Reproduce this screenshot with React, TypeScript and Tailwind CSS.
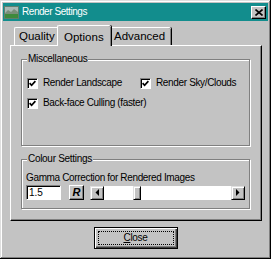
import * as React from "react";

const font = { fontFamily: '"Liberation Sans", Arial, sans-serif' };

const CheckBox = () => (
  <span className="w-[11px] h-[11px] shrink-0 bg-white border border-t-[#808080] border-l-[#808080] border-b-white border-r-white shadow-[inset_1px_1px_0_#000] flex items-center justify-center">
    <svg width="7" height="7" viewBox="0 0 7 7">
      <path d="M0.6 3.2 L2.6 5.3 L6.4 1.2" stroke="#000" strokeWidth="1.7" fill="none" />
    </svg>
  </span>
);

interface OptionProps {
  label: string;
  className?: string;
}

const Option = ({ label, className }: OptionProps) => (
  <div className={"flex items-center gap-[5px] h-[14px] " + (className ?? "")}>
    <CheckBox />
    <span className="text-[10px] tracking-[-0.35px] text-black leading-none">{label}</span>
  </div>
);

interface GroupProps {
  title: string;
  className?: string;
  children: React.ReactNode;
}

const Group = ({ title, className, children }: GroupProps) => (
  <div
    className={
      "relative ml-[10px] w-[229px] border border-[#808080] shadow-[1px_1px_0_#fff,inset_1px_1px_0_#fff] " +
      (className ?? "")
    }
  >
    <span className="absolute left-[5px] -top-[7px] bg-[#c3c3c3] px-[1px] text-[10px] tracking-[-0.3px] leading-[12px] text-black">
      {title}
    </span>
    {children}
  </div>
);

const Arrow = ({ dir }: { dir: "left" | "right" }) => (
  <div className="w-[14px] h-full bg-[#c3c3c3] border border-t-[#dfdfdf] border-l-[#dfdfdf] border-r-black border-b-black shadow-[inset_1px_1px_0_#fff,inset_-1px_-1px_0_#808080] flex items-center justify-center">
    <svg width="4" height="7" viewBox="0 0 4 7">
      {dir === "left" ? <path d="M4 0 L0.5 3.5 L4 7 Z" fill="#000" /> : <path d="M0 0 L3.5 3.5 L0 7 Z" fill="#000" />}
    </svg>
  </div>
);

export default function App() {
  return (
    <div
      style={font}
      className="w-[271px] h-[259px] bg-[#c3c3c3] p-[3px] flex flex-col shadow-[inset_-1px_-1px_0_#000,inset_1px_1px_0_#dfdfdf,inset_-2px_-2px_0_#808080,inset_2px_2px_0_#fff]"
    >
      {/* title bar */}
      <div className="h-[18px] bg-[#128d8d] flex items-center pl-[1px] pr-[2px]">
        <svg width="15" height="13" viewBox="0 0 15 13" className="shrink-0">
          <rect x="0" y="0" width="15" height="13" fill="#5f7f6f" />
          <rect x="1" y="1" width="13" height="6" fill="#a9b8b4" />
          <rect x="1" y="7" width="13" height="5" fill="#3f8a3c" />
          <path d="M1 7 L4 4 L7 6 L10 3 L14 6 L14 8 L1 8 Z" fill="#7a8f7a" />
        </svg>
        <span className="ml-[3px] text-white text-[10px] tracking-[-0.45px] leading-none">Render Settings</span>
        <div className="ml-auto w-[15px] h-[13px] bg-[#c3c3c3] border border-t-white border-l-white border-r-black border-b-black shadow-[inset_-1px_-1px_0_#808080] flex items-center justify-center">
          <svg width="8" height="7" viewBox="0 0 8 7">
            <path d="M0.5 0.5 L7.5 6.5 M7.5 0.5 L0.5 6.5" stroke="#000" strokeWidth="1.6" />
          </svg>
        </div>
      </div>

      {/* tabs */}
      <div className="mt-[4px] ml-[7px] h-[20px] flex items-end">
        <div className="ml-[4px] w-[45px] h-[18px] border-t border-l border-white rounded-tl-[2px] flex items-center pl-[4px] text-[11.5px] text-black">
          Quality
        </div>
        <div className="relative z-10 -ml-[2px] w-[54px] h-[21px] -mb-[1px] bg-[#c3c3c3] border-t border-l border-white rounded-t-[2px] shadow-[inset_-1px_0_0_#808080,1px_0_0_#000] flex items-start pt-[3px] pl-[6px] text-[11.5px] text-black">
          Options
        </div>
        <div className="w-[60px] h-[18px] border-t border-white rounded-tr-[2px] shadow-[inset_-1px_0_0_#808080,1px_0_0_#000] flex items-center pl-[3px] text-[11.5px] text-black">
          Advanced
        </div>
      </div>

      {/* panel */}
      <div className="ml-[7px] w-[252px] h-[176px] border-t border-l border-white border-r border-b border-r-black border-b-black shadow-[inset_-1px_-1px_0_#808080] flex flex-col">
        <Group title="Miscellaneous" className="mt-[13px] h-[87px]">
          <div className="pt-[16px] pl-[5px] flex flex-col gap-[6px]">
            <div className="flex">
              <Option label="Render Landscape" className="w-[113px]" />
              <Option label="Render Sky/Clouds" />
            </div>
            <Option label="Back-face Culling (faster)" />
          </div>
        </Group>

        <Group title="Colour Settings" className="mt-[13px] h-[50px]">
          <div className="pt-[12px] pl-[4px]">
            <div className="h-[12px] text-[10px] tracking-[-0.35px] leading-[12px] text-black">
              Gamma Correction for Rendered Images
            </div>
            <div className="mt-[1px] flex items-center h-[15px]">
              <div className="w-[35px] h-[15px] bg-white border border-t-[#808080] border-l-[#808080] border-b-white border-r-white shadow-[inset_1px_1px_0_#000] pl-[2px] flex items-center text-[10px] leading-none text-black">
                1.5
              </div>
              <div className="ml-[8px] w-[15px] h-[15px] bg-[#c3c3c3] border border-t-white border-l-white border-r-black border-b-black shadow-[inset_-1px_-1px_0_#808080] flex items-center justify-center text-[11px] font-bold italic leading-none text-black">
                R
              </div>
              <div className="ml-[6px] w-[155px] h-[14px] bg-white flex">
                <Arrow dir="left" />
                <div className="ml-[29px] w-[8px] h-full bg-[#c3c3c3] border border-t-[#dfdfdf] border-l-[#dfdfdf] border-r-black border-b-black shadow-[inset_1px_1px_0_#fff,inset_-1px_-1px_0_#808080]" />
                <div className="flex-1" />
                <Arrow dir="right" />
              </div>
            </div>
          </div>
        </Group>
      </div>

      {/* close button */}
      <div className="mt-[6px] flex justify-center">
        <div className="w-[84px] h-[22px] border border-black bg-[#c3c3c3] shadow-[inset_1px_1px_0_#fff,inset_-1px_-1px_0_#404040,inset_-2px_-2px_0_#808080] flex p-[3px]">
          <div className="flex-1 border border-dotted border-black flex items-center justify-center text-[10px] tracking-[-0.3px] leading-none text-black">
            <span>
              <span className="underline">C</span>lose
            </span>
          </div>
        </div>
      </div>
    </div>
  );
}
